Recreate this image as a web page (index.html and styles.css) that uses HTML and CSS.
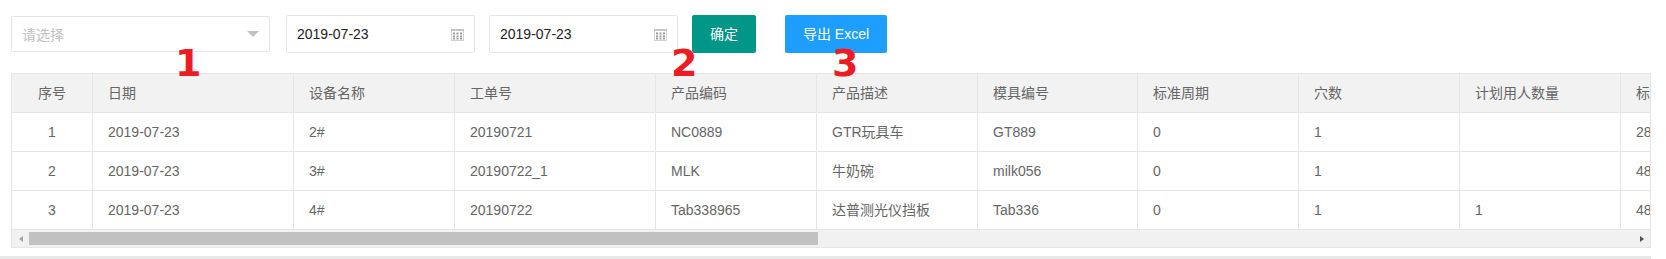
FILE: index.html
```html
<!DOCTYPE html>
<html lang="zh-CN">
<head>
<meta charset="utf-8">
<title>生产报表</title>
<link rel="stylesheet" href="styles.css">
</head>
<body>
<div class="page">
  <div class="toolbar">
    <div class="select">
      <span class="placeholder">请选择</span>
      <i class="caret"></i>
    </div>
    <div class="date date-start">
      <span class="date-text">2019-07-23</span>
      <svg class="cal" width="13" height="12" viewBox="0 0 13 12">
        <rect x="0.5" y="0.5" width="12" height="11" fill="none" stroke="#d2d2d2"/>
        <rect x="0" y="0" width="13" height="2" fill="#c4c4c4"/>
        <g fill="#9a9a9a">
          <rect x="2" y="3.5" width="2" height="2"/><rect x="5.5" y="3.5" width="2" height="2"/><rect x="9" y="3.5" width="2" height="2"/>
          <rect x="2" y="6.5" width="2" height="2"/><rect x="5.5" y="6.5" width="2" height="2"/><rect x="9" y="6.5" width="2" height="2"/>
          <rect x="2" y="9" width="2" height="1.5"/><rect x="5.5" y="9" width="2" height="1.5"/><rect x="9" y="9" width="2" height="1.5"/>
        </g>
      </svg>
    </div>
    <div class="date date-end">
      <span class="date-text">2019-07-23</span>
      <svg class="cal" width="13" height="12" viewBox="0 0 13 12">
        <rect x="0.5" y="0.5" width="12" height="11" fill="none" stroke="#d2d2d2"/>
        <rect x="0" y="0" width="13" height="2" fill="#c4c4c4"/>
        <g fill="#9a9a9a">
          <rect x="2" y="3.5" width="2" height="2"/><rect x="5.5" y="3.5" width="2" height="2"/><rect x="9" y="3.5" width="2" height="2"/>
          <rect x="2" y="6.5" width="2" height="2"/><rect x="5.5" y="6.5" width="2" height="2"/><rect x="9" y="6.5" width="2" height="2"/>
          <rect x="2" y="9" width="2" height="1.5"/><rect x="5.5" y="9" width="2" height="1.5"/><rect x="9" y="9" width="2" height="1.5"/>
        </g>
      </svg>
    </div>
    <button class="btn btn-ok">确定</button>
    <button class="btn btn-export">导出 Excel</button>
  </div>

  <div class="table-view">
    <div class="table-box">
      <table class="grid">
        <colgroup>
          <col class="w81"><col class="w201"><col class="w161"><col class="w201"><col class="w161">
          <col class="w161"><col class="w160"><col class="w161"><col class="w161"><col class="w161">
          <col class="w161"><col class="w161"><col class="w161">
        </colgroup>
        <thead>
          <tr>
            <th class="center">序号</th><th>日期</th><th>设备名称</th><th>工单号</th><th>产品编码</th>
            <th>产品描述</th><th>模具编号</th><th>标准周期</th><th>穴数</th><th>计划用人数量</th>
            <th>标准产能</th><th>实际产量</th><th>备注</th>
          </tr>
        </thead>
        <tbody>
          <tr>
            <td class="center">1</td><td>2019-07-23</td><td>2#</td><td>20190721</td><td>NC0889</td>
            <td>GTR玩具车</td><td>GT889</td><td>0</td><td>1</td><td></td>
            <td>2880</td><td>0</td><td></td>
          </tr>
          <tr>
            <td class="center">2</td><td>2019-07-23</td><td>3#</td><td>20190722_1</td><td>MLK</td>
            <td>牛奶碗</td><td>milk056</td><td>0</td><td>1</td><td></td>
            <td>4800</td><td>0</td><td></td>
          </tr>
          <tr>
            <td class="center">3</td><td>2019-07-23</td><td>4#</td><td>20190722</td><td>Tab338965</td>
            <td>达普测光仪挡板</td><td>Tab336</td><td>0</td><td>1</td><td>1</td>
            <td>4800</td><td>0</td><td></td>
          </tr>
        </tbody>
      </table>
    </div>
    <div class="hscroll">
      <div class="sb-btn sb-left"><i class="arrow-left"></i></div>
      <div class="sb-track"><div class="sb-thumb"></div></div>
      <div class="sb-btn sb-right"><i class="arrow-right"></i></div>
    </div>
  </div>

  <div class="footer-line"></div>

  <span class="mark mark-1">1</span>
  <span class="mark mark-2">2</span>
  <span class="mark mark-3">3</span>
</div>
</body>
</html>
```
FILE: styles.css
```css
* { box-sizing: border-box; }

html, body {
  margin: 0;
  padding: 0;
  background: #fff;
}

body {
  font-family: "Liberation Sans", Arial, "Noto Sans CJK SC", sans-serif;
  font-size: 14px;
  color: #666;
}

.page {
  position: relative;
  width: 1666px;
  height: 259px;
  padding-top: 15px;
  overflow: hidden;
}

/* ---------- toolbar ---------- */
.toolbar {
  display: flex;
  align-items: center;
  height: 38px;
  padding-left: 11px;
}

.select {
  position: relative;
  width: 259px;
  height: 36px;
  border: 1px solid #e6e6e6;
  border-radius: 2px;
  background: #fff;
  display: flex;
  align-items: center;
  padding-left: 10px;
  margin-right: 16px;
}

.placeholder {
  color: #c2c2c2;
  font-size: 14px;
}

.caret {
  position: absolute;
  right: 10px;
  top: 50%;
  margin-top: -3px;
  width: 0;
  height: 0;
  border-left: 6px solid transparent;
  border-right: 6px solid transparent;
  border-top: 6px solid #c2c2c2;
}

.date {
  width: 189px;
  height: 38px;
  border: 1px solid #e6e6e6;
  border-radius: 2px;
  background: #fff;
  display: flex;
  align-items: center;
  justify-content: space-between;
  padding: 0 10px 0 10px;
}

.date-start { margin-right: 14px; }
.date-end { margin-right: 14px; }

.date-text {
  color: #222;
  font-size: 14px;
}

.cal {
  display: block;
  margin-top: 1px;
}

.btn {
  height: 38px;
  line-height: 38px;
  padding: 0 18px;
  border: none;
  border-radius: 2px;
  color: #fff;
  font-family: "Liberation Sans", Arial, "Noto Sans CJK SC", sans-serif;
  font-size: 14px;
  white-space: nowrap;
  cursor: pointer;
}

.btn-ok {
  background: #009688;
  width: 64px;
  padding: 0;
  margin-right: 29px;
}

.btn-export {
  background: #1e9fff;
  width: 102px;
  padding: 0;
}

/* ---------- table ---------- */
.table-view {
  margin-top: 20px;
  margin-left: 11px;
  width: 1640px;
  border: 1px solid #e6e6e6;
  background: #fff;
}

.table-box {
  overflow: hidden;
}

.grid {
  table-layout: fixed;
  border-collapse: separate;
  border-spacing: 0;
  width: 2092px;
}

.w81 { width: 81px; }
.w160 { width: 160px; }
.w161 { width: 161px; }
.w201 { width: 201px; }

.grid th,
.grid td {
  height: 39px;
  padding: 0 15px;
  line-height: 38px;
  border-right: 1px solid #e6e6e6;
  border-bottom: 1px solid #e6e6e6;
  text-align: left;
  font-weight: normal;
  font-size: 14px;
  color: #666;
  white-space: nowrap;
  overflow: hidden;
}

.grid th {
  background: #f2f2f2;
}

.grid .center {
  text-align: center;
}

/* fake horizontal scrollbar */
.hscroll {
  display: flex;
  height: 17px;
  background: #f1f1f1;
}

.sb-btn {
  width: 17px;
  height: 17px;
  display: flex;
  align-items: center;
  justify-content: center;
}

.arrow-left {
  width: 0;
  height: 0;
  border-top: 3.5px solid transparent;
  border-bottom: 3.5px solid transparent;
  border-right: 4px solid #a3a3a3;
}

.arrow-right {
  width: 0;
  height: 0;
  border-top: 3.5px solid transparent;
  border-bottom: 3.5px solid transparent;
  border-left: 4px solid #505050;
}

.sb-track {
  flex: 1;
  padding: 2px 0;
}

.sb-thumb {
  width: 789px;
  height: 13px;
  background: #c1c1c1;
}

.footer-line {
  margin-top: 8px;
  width: 1651px;
  height: 4px;
  background: #e8e8e8;
}

/* red annotation numbers overlaid on the screenshot */
.mark {
  position: absolute;
  top: 44px;
  font-family: "DejaVu Sans", sans-serif;
  font-weight: bold;
  font-size: 38px;
  line-height: 38px;
  color: #ec1b24;
}

.mark-1 { left: 175px; }
.mark-2 { left: 671px; }
.mark-3 { left: 832px; }
```
